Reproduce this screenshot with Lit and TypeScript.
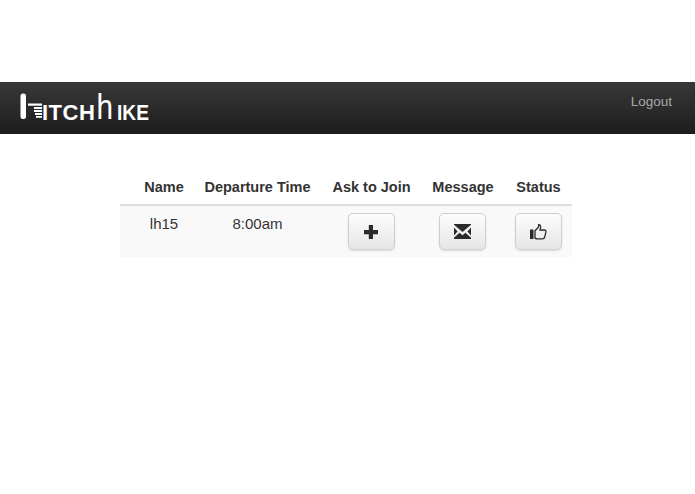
import { LitElement, html, css } from "lit";
import { customElement } from "lit/decorators.js";

@customElement("app-root")
export class AppRoot extends LitElement {
  static styles = css`
    :host { display: block; min-height: 494px; background: #fff; font-family: "Liberation Sans", Arial, sans-serif; color: #333; padding-top: 82px; box-sizing: border-box; }
    .nav { height: 52px; background: linear-gradient(#383838, #1d1d1d); display: flex; justify-content: space-between; align-items: flex-start; padding: 0 23px 0 20px; }
    .logo { display: flex; align-items: flex-end; height: 38px; margin-top: 9px; color: #fff; font-weight: 700; font-size: 22px; line-height: 21px; }
    .logo svg { display: block; flex: none; overflow: visible; margin-bottom: 9px; }
    .logo .t { padding-bottom: 6px; letter-spacing: 0.5px; }
    .logo .ike { display: inline-block; letter-spacing: 0; margin-left: 1px; transform: scaleX(0.87); transform-origin: left; }
    .logo .h { display: inline-block; font-weight: 400; font-size: 35px; line-height: 35px; padding: 0 1px 5px 0; transform: scaleX(0.85); }
    .logout { color: #a8a8a8; font-size: 13.5px; line-height: 16px; margin-top: 12px; }
    .wrap { padding: 36px 0 0 120px; }
    table { width: 452px; border-collapse: collapse; table-layout: fixed; }
    th { font-size: 14.5px; font-weight: 700; line-height: 18px; height: 35px; box-sizing: border-box; padding: 0 0 8px; vertical-align: bottom; text-align: center; border-bottom: 2px solid #ddd; color: #333; white-space: nowrap; }
    td { background: #f9f9f9; height: 52px; box-sizing: border-box; padding: 8px 0 0; vertical-align: top; text-align: center; font-size: 15px; line-height: 20px; color: #333; }
    .first { padding-left: 15px; }
    .btn { display: inline-flex; align-items: center; justify-content: center; width: 47px; height: 37px; box-sizing: border-box; border: 1px solid #cfcfcf; border-radius: 5px; background: linear-gradient(#fdfdfd, #e6e6e6); box-shadow: 0 1px 2px rgba(0,0,0,.12); padding: 0; margin: 0; }
    td.act { padding-top: 7px; line-height: 0; }
    td.msg { padding-right: 1px; }
  `;

  render() {
    return html`
      <div class="nav">
        <div class="logo">
          <svg width="22" height="27" viewBox="0 0 22 27" fill="#fff">
            <rect x="0.5" y="0.5" width="5.5" height="25.5" rx="2.500"></rect>
            <rect x="8" y="10.5" width="14" height="2.2"></rect>
            <rect x="14" y="14" width="8" height="2"></rect>
            <rect x="14" y="17" width="8" height="2"></rect>
            <rect x="15" y="20" width="7" height="2"></rect>
            <rect x="16" y="23" width="6" height="1.8"></rect>
          </svg>
          <span class="t">ITCH</span><span class="h">h</span><span class="t ike">IKE</span>
        </div>
        <div class="logout">Logout</div>
      </div>
      <div class="wrap">
        <table>
          <colgroup>
            <col style="width:73px" /><col style="width:129px" /><col style="width:99px" /><col style="width:84px" /><col style="width:67px" />
          </colgroup>
          <thead>
            <tr><th class="first">Name</th><th>Departure Time</th><th>Ask to Join</th><th>Message</th><th>Status</th></tr>
          </thead>
          <tbody>
            <tr>
              <td class="first">lh15</td>
              <td>8:00am</td>
              <td class="act"><button class="btn" aria-label="Ask to join">
                <svg width="16" height="16" viewBox="1 0 16 16" fill="#2a2a2a"><path d="M5.8 1h4.2v5h5v4.2h-5V15H5.8v-4.8H1V6h4.8z"></path></svg>
              </button></td>
              <td class="act msg"><button class="btn" aria-label="Message">
                <svg width="17" height="15" viewBox="0 0 17 15" fill="#2a2a2a"><path d="M0 0h17v.8L8.500 8 0 .8z"></path><path d="M0 3.500v8l3.600-4z"></path><path d="M17 3.500v8l-3.600-4z"></path><path d="M0 15h17v-1.200L11.500 8.800l-3 2.500-3-2.500L0 13.800z"></path></svg>
              </button></td>
              <td class="act"><button class="btn" aria-label="Status">
                <svg width="17" height="16" viewBox="0 0 17 16" fill="none" stroke="#2a2a2a" stroke-width="1.3"><rect x="0" y="5.500" width="3.500" height="9.500" fill="#2a2a2a" stroke="none"></rect><path d="M5 6.800 8.600 3V.7c1.600 0 2.400 1.300 2 3.200L10 6h4.300c1.300 0 1.900 1 1.600 2.100l-1.300 5.200c-.3 1-1 1.600-2 1.600H7.400c-.9 0-1.500-.3-2.400-.8z"></path></svg>
              </button></td>
            </tr>
          </tbody>
        </table>
      </div>
    `;
  }
}
